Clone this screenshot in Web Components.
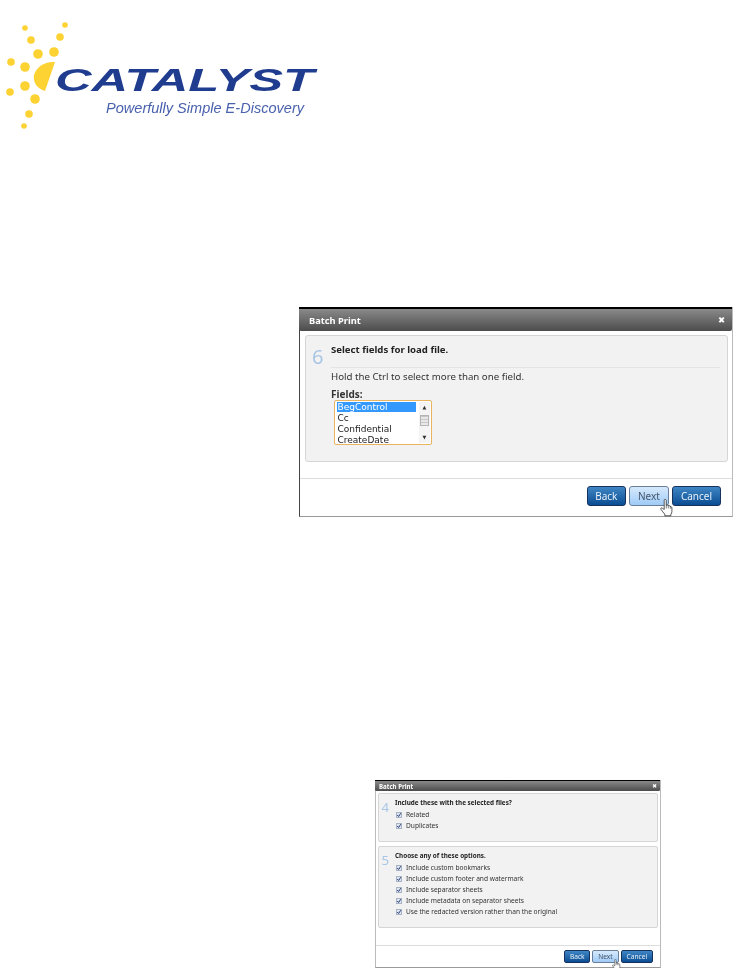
<!DOCTYPE html>
<html><head><meta charset="utf-8"><title>Batch Print</title>
<style>
html,body{margin:0;padding:0;background:#fff}
body{width:735px;height:968px;overflow:hidden;font-family:"Noto Sans","DejaVu Sans",sans-serif}
.big{display:block;font-size:10px;width:434px;margin:172px 0 0 299px;filter:blur(.25px);--lb:#444;
 --th:24px;--tp:10px;--tr:7px;--bp:4px 4px 0 5px;--gap:4px;--fm:16px;--fp:7px 11px 10px 0;--pl:6px;--nw:19px;--hb:0px}
.small{display:block;font-size:6.6px;width:286px;margin:263px 0 0 375px;filter:blur(.4px);--lb:#bbb;
 --th:11px;--tp:4px;--tr:3px;--bp:2px 2px 0 2px;--gap:4px;--fm:17px;--fp:4px 7px 4px 0;--pl:2.5px;--nw:13.5px;--hb:2px}
.hold{margin:0;font-size:.97em;line-height:11px;color:#333}
.flabel{margin-top:7px;font-size:1em;line-height:11px;font-weight:700;color:#333}
</style></head><body>
<app-logo></app-logo>
<batch-dialog class="big">
  <step-panel n="6" style="height:12.7em">
    <span slot="head">Select fields for load file.</span>
    <hr-line></hr-line>
    <p class="hold">Hold the Ctrl to select more than one field.</p>
    <div class="flabel">Fields:</div>
    <field-list></field-list>
  </step-panel>
  <dlg-button slot="btn">Back</dlg-button>
  <dlg-button slot="btn" active>Next</dlg-button>
  <dlg-button slot="btn" wide>Cancel</dlg-button>
</batch-dialog>
<batch-dialog class="small">
  <step-panel n="4" style="height:49px">
    <span slot="head">Include these with the selected files?</span>
    <check-row>Related</check-row>
    <check-row>Duplicates</check-row>
  </step-panel>
  <step-panel n="5" style="height:82px">
    <span slot="head">Choose any of these options.</span>
    <check-row>Include custom bookmarks</check-row>
    <check-row>Include custom footer and watermark</check-row>
    <check-row>Include separator sheets</check-row>
    <check-row>Include metadata on separator sheets</check-row>
    <check-row>Use the redacted version rather than the original</check-row>
  </step-panel>
  <dlg-button slot="btn">Back</dlg-button>
  <dlg-button slot="btn" active>Next</dlg-button>
  <dlg-button slot="btn" wide>Cancel</dlg-button>
</batch-dialog>
<script>
function def(name,html,init){
  customElements.define(name,class extends HTMLElement{
    constructor(){super();this.attachShadow({mode:'open'}).innerHTML=html;}
    connectedCallback(){if(init)init.call(this,this.shadowRoot);}
  });
}
def('app-logo',`<style>:host{display:block;width:330px;height:135px}svg{display:block;filter:blur(.6px)}
text{font-family:"Liberation Sans",sans-serif;font-style:italic}</style>
<svg width="330" height="135" viewBox="0 0 330 135" xmlns="http://www.w3.org/2000/svg">
<g fill="#fdd233">
<circle cx="25" cy="28" r="2.8"/><circle cx="65" cy="25" r="2.8"/><circle cx="31" cy="40" r="3.8"/><circle cx="60" cy="37" r="3.8"/>
<circle cx="38" cy="54" r="4.8"/><circle cx="54" cy="52" r="4.8"/><circle cx="11" cy="62" r="3.8"/><circle cx="25" cy="67" r="4.8"/>
<circle cx="25" cy="86" r="4.8"/><circle cx="10" cy="92" r="3.8"/><circle cx="35" cy="99" r="4.8"/><circle cx="29" cy="114" r="3.8"/><circle cx="24" cy="126" r="2.8"/>
<path d="M55 62 L45 91 C36 88 33 82 34 75 C36 67 45 61 55 62Z"/>
</g>
<text x="55" y="91" font-size="31" font-weight="700" fill="#1f3c8f" textLength="259" lengthAdjust="spacingAndGlyphs">CATALYST</text>
<text x="106" y="113" font-size="14.5" fill="#4a62ad" textLength="198" lengthAdjust="spacingAndGlyphs">Powerfully Simple E-Discovery</text>
</svg>`);
def('batch-dialog',`<style>
:host{display:block;box-sizing:border-box;background:#fff;border-left:1px solid var(--lb);border-right:1px solid #bbb;border-bottom:1px solid #999;color:#333}
.title{display:flex;align-items:center;justify-content:space-between;height:var(--th);box-sizing:border-box;border-top:.2em solid #000;padding:0 var(--tr) 0 var(--tp);margin-left:-1px;
background:linear-gradient(#8a8a8a,#4c4c4c);color:#fff;font-weight:700;font-size:1em;border-radius:0 0 .2em .2em}
.title span:first-child{font-size:.93em}
.x{font-family:"DejaVu Sans",sans-serif;font-size:.85em;font-weight:700}
.body{display:flex;flex-direction:column;gap:var(--gap);padding:var(--bp)}
.foot{margin-top:var(--fm);border-top:1px solid #ddd;padding:var(--fp);display:flex;justify-content:flex-end;gap:.3em}
</style>
<div class="title"><span>Batch Print</span><span class="x">✖</span></div>
<div class="body"><slot></slot></div>
<div class="foot"><slot name="btn"></slot></div>`);
def('step-panel',`<style>
:host{display:flex;box-sizing:border-box;background:#f2f2f2;border:1px solid #d5d5d5;border-radius:.3em;padding:.75em 0 0 var(--pl)}
.n{width:var(--nw);flex:none}
.n span{display:block;font-size:2em;line-height:.9em;color:#a9c6e6;margin-top:.2em}
.c{flex:1;padding-right:.7em;min-width:0}
.h{font-weight:700;font-size:.96em;color:#222;line-height:1.35em;padding-bottom:var(--hb)}
</style>
<div class="n"><span></span></div>
<div class="c"><div class="h"><slot name="head"></slot></div><slot></slot></div>`,function(r){r.querySelector('.n span').textContent=this.getAttribute('n');});
def('hr-line',`<style>:host{display:block;border-top:1px solid #e3e3e3;height:0;margin-top:10.5px;margin-bottom:3.5px}</style>`);
def('field-list',`<style>
:host{display:flex;width:98px;height:45px;box-sizing:border-box;margin:-.5px 0 0 3px;background:#fff;border:1.6px solid #e8b45f;border-radius:2px;padding:1px 1px 1px 1.5px;color:#222}
ul{list-style:none;margin:0;padding:0;flex:1;font-family:"DejaVu Sans",sans-serif;font-size:9px;line-height:11px}
li{padding-left:1px;height:11px}
li.s{background:#3399ff;color:#fff;height:11px;line-height:11px;box-shadow:inset 0 -1px #fff}
.sb{width:11px;background:#f4f4f4;position:relative;display:flex;flex-direction:column;align-items:center;justify-content:space-between;margin-left:3px;padding:3px 0}
.a{font-family:"DejaVu Sans",sans-serif;font-size:5px;line-height:5px;color:#333}
.t{position:absolute;top:13px;left:1px;width:9px;height:11px;background:repeating-linear-gradient(#c8c8c8 0 1px,#e8e8e8 1px 3px);border:1px solid #b5b5b5;box-sizing:border-box}
</style><ul><li class="s">BegControl</li><li>Cc</li><li>Confidential</li><li>CreateDate</li></ul><div class="sb"><span class="a">▲</span><span class="t"></span><span class="a">▼</span></div>`);
def('check-row',`<style>
:host{display:flex;align-items:center;height:11px;margin-left:1px;color:#333;gap:4px;white-space:nowrap;font-size:1em}
i{flex:none;box-sizing:border-box;width:6px;height:6px;background:#dfe6f1;border:1px solid #a8b4c6;position:relative}
svg{position:absolute;left:-1px;top:-1px;width:6px;height:6px}
</style><i><svg viewBox="0 0 6 6"><path d="M1.2 3 L2.6 4.5 L4.8 1.2" fill="none" stroke="#2a3f73" stroke-width="1"/></svg></i><span><slot></slot></span>`);
def('dlg-button',`<style>
:host{display:inline-flex;align-items:center;justify-content:center;position:relative;width:3.95em;height:2em;box-sizing:border-box;border:.1em solid #16315c;border-radius:.3em;
background:linear-gradient(#3f86c4,#0b4d93);color:#e8f2fb}
:host([wide]){width:4.9em}
:host([active]){background:linear-gradient(#d6e9fb,#9fcbf7);color:#44556a;border-color:#6a7f97;width:4em}
svg{position:absolute;display:none;right:-.45em;top:1.2em;width:1.25em;height:1.75em}
:host([active]) svg{display:block}
</style><span><slot></slot></span>
<svg viewBox="0 0 12 17"><path d="M4 1.2c0-1 2-1 2 0v5l1-.3c.6-.2 1 .1 1 .5l1 .1c.6 0 1 .3 1 .7l.8.3c.4.2.7.6.7 1.2v3.6c0 1-.5 1.8-1 2.4v1.6H4.6v-1.6C3.4 13.4 1.8 11.6.8 10c-.6-1 .5-1.9 1.4-1.1L4 10.2Z" fill="#fff" stroke="#333" stroke-width=".8" stroke-linejoin="round"/><path d="M6 6.2v3M8 6.4v2.8M10 7v2.4" stroke="#333" stroke-width=".6" fill="none"/></svg>`);
</script>
</body></html>
